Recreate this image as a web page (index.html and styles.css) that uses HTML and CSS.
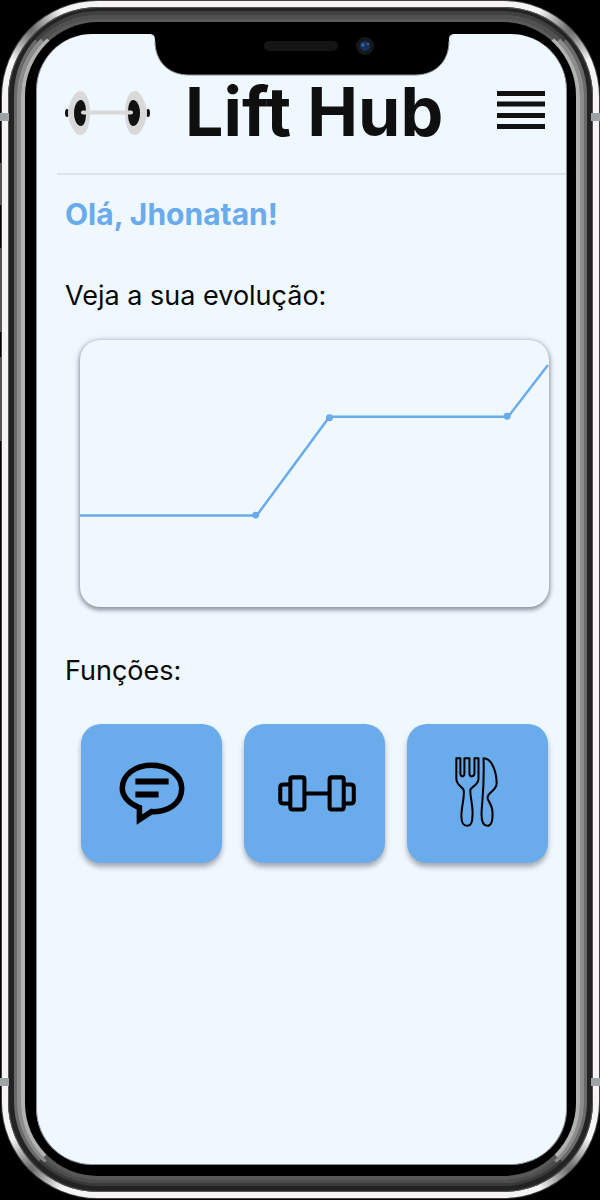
FILE: index.html
```html
<!DOCTYPE html>
<html lang="pt-BR">
<head>
<meta charset="utf-8">
<meta name="viewport" content="width=device-width, initial-scale=1">
<title>Lift Hub</title>
<link rel="stylesheet" href="styles.css">
</head>
<body>
<div class="phone">
  <span class="side-key side-key-mute"></span>
  <span class="side-key side-key-up"></span>
  <span class="side-key side-key-down"></span>
  <div class="steel"><div class="band"><div class="ring ring-outer"><div class="ring ring-middle"><div class="ring ring-inner">
  <div class="screen">
    <svg class="notch" viewBox="0 0 306 42" aria-hidden="true">
      <path d="M0 0C5 0 6 2 6 7C6 27 19 41 40 41H266C287 41 300 27 300 7C300 2 301 0 306 0Z" fill="#000"/>
      <path d="M6 7C6 27 19 41 40 41H266C287 41 300 27 300 7" fill="none" stroke="#8a8e96"/>
      <rect x="115" y="7" width="74" height="10" rx="5" fill="#151515"/>
      <circle cx="216" cy="12" r="9" fill="#17181b"/>
      <circle cx="216" cy="12" r="5" fill="#15305a"/>
      <circle cx="214" cy="11" r="2" fill="#286198"/>
      <circle cx="219" cy="10" r="1" fill="#3573ad"/>
    </svg>
    <header class="topbar">
      <svg class="logo" viewBox="0 -4 86 50" aria-hidden="true">
        <ellipse cx="2" cy="23" rx="2" ry="4" fill="#111"/><ellipse cx="83" cy="23" rx="2" ry="4" fill="#111"/>
        <path d="M15 1C21 1 25 10 25 23C25 36 21 45 15 45C9 45 3 31 3 23C3 15 9 1 15 1Z" fill="#d9d9d9"/>
        <path d="M70 1C64 1 60 10 60 23C60 36 64 45 70 45C76 45 82 31 82 23C82 15 76 1 70 1Z" fill="#d9d9d9"/>
        <path d="M16 10C19 10 21 15 21 23C21 31 19 36 16 36C12 36 9 30 9 23C9 16 12 10 16 10Z" fill="#111"/>
        <path d="M68 10C65 10 63 15 63 23C63 31 65 36 68 36C72 36 75 30 75 23C75 16 72 10 68 10Z" fill="#111"/>
        <path d="M18 22.500H66" stroke="#d9d9d9" stroke-width="4" stroke-linecap="round"/>
      </svg>
      <h1 class="brand">Lift Hub</h1>
      <button class="menu" type="button" aria-label="Menu">
        <svg class="menu-icon" viewBox="0 1 48 40" aria-hidden="true"><path d="M0 3.500H48M0 14H48M0 25.500H48M0 36.500H48" stroke="#111" stroke-width="5"/></svg>
      </button>
    </header>
    <main class="content">
      <p class="greeting">Olá, Jhonatan!</p>
      <h2 class="section-title">Veja a sua evolução:</h2>
      <div class="chart">
        <svg class="chart-plot" viewBox="0 0 470 268" role="img" aria-label="Gráfico de evolução">
          <path d="M0 176H177L250 77H429L469 25" fill="none" stroke="#69abeb" stroke-width="2.500"/>
          <g fill="#69abeb"><circle cx="176" cy="175.500" r="3.500"/><circle cx="250" cy="78" r="3.500"/><circle cx="428" cy="76.500" r="3.500"/></g>
        </svg>
      </div>
      <h2 class="section-title">Funções:</h2>
      <nav class="actions">
        <button class="action" type="button" aria-label="Mensagens">
          <svg class="action-icon" viewBox="0 0 140 138" fill="none" stroke="#000" aria-hidden="true">
            <path d="M58 83C48 79 41 72 41 64C41 50 54 41 70 41C87 41 100 51 100 64C100 79 86 88 70 87L58 95Z" stroke-width="5.500"/>
            <path d="M54 57H87M54 70H77" stroke-width="6"/>
          </svg>
        </button>
        <button class="action" type="button" aria-label="Treinos">
          <svg class="action-icon" viewBox="0 0 140 138" fill="none" stroke="#000" stroke-width="4" aria-hidden="true">
            <rect x="46" y="53" width="14" height="32" rx="2"/><rect x="85" y="53" width="14" height="32" rx="2"/>
            <path d="M46 60H39Q36 60 36 63V76Q36 79 39 79H46M99 60H106Q109 60 109 63V76Q109 79 106 79H99M60 69H85"/>
          </svg>
        </button>
        <button class="action" type="button" aria-label="Alimentação">
          <svg class="action-icon" viewBox="0 0 140 138" fill="none" stroke="#000" stroke-width="2" stroke-linejoin="round" aria-hidden="true">
            <path d="M49 34H53V49Q53 52 55 52Q57 52 57 49V34H62V49Q62 52 64 52Q67 52 67 49V34H71V54C71 60 66 61 63 65C62 70 66 82 65 91C65 99 63 101 60 101C56 101 54 99 54 91C54 82 58 70 56 65C53 61 49 60 49 54Z"/>
            <path d="M76 34C85 34 89 49 89 59C89 66 80 68 80 73C80 77 85 79 85 89C85 98 83 101 80 101C76 101 74 98 74 90C74 78 77 68 76 34Z"/>
          </svg>
        </button>
      </nav>
    </main>
  </div>
  </div></div></div></div></div>
  <span class="antenna antenna-left antenna-top"></span><span class="antenna antenna-right antenna-top"></span>
  <span class="antenna antenna-left antenna-bottom"></span><span class="antenna antenna-right antenna-bottom"></span>
</div>
</body>
</html>
```
FILE: styles.css
```css
* { box-sizing: border-box; }
body { margin: 0; background: #000; font-family: Inter, "Open Sans", sans-serif; color: #080808; }
h1, h2, p { margin: 0; }
button { padding: 0; border: 0; background: none; cursor: pointer; }
svg { display: block; }

.phone { position: relative; display: flex; min-height: 100vh; padding: 1px 1px 2px 2px; }
.steel, .band, .ring { display: flex; flex: 1; min-width: 0; }
.steel {
  padding: 6px;
  border-radius: 96px;
  background:
    radial-gradient(circle at 28px 28px, #666 0, transparent 36px),
    radial-gradient(circle at calc(100% - 28px) 28px, #666 0, transparent 36px),
    radial-gradient(circle at 28px calc(100% - 28px), #666 0, transparent 36px),
    radial-gradient(circle at calc(100% - 28px) calc(100% - 28px), #666 0, transparent 36px),
    #f5f3f3;
  box-shadow: 0 0 0 1px #444;
}
.band { padding: 4px 6px 6px; border-radius: 90px; background: #232323; box-shadow: inset 0 0 0 1px #555; }
.ring { border-style: solid; }
.ring-outer { border-width: 4px 3px 3px; border-color: #404040 #6a6a6a #3a3a3a; border-radius: 84px; background: #555; }
.ring-middle { border-width: 4px 4px 3px; border-color: #505050 #8c8c8c #4c4c4c; border-radius: 81px; background: #444; }
.ring-inner { padding: 12px 9px 11px 11px; border-width: 3px 4px 4px; border-color: #5a5a5a #b2b2b2 #585858; border-radius: 77px; background: #000; }

.side-key { position: absolute; left: 0; width: 2px; background: #555; }
.side-key-mute { top: 163px; height: 42px; }
.side-key-up { top: 248px; height: 84px; }
.side-key-down { top: 357px; height: 84px; }
.antenna { position: absolute; width: 9px; height: 8px; background: #9ea3a3; }
.antenna-left { left: 0; }
.antenna-right { right: 0; }
.antenna-top { top: 113px; }
.antenna-bottom { bottom: 114px; }

.screen { flex: 1; min-width: 0; overflow: hidden; border: 1px solid #8a8e96; border-width: 0 1px 1px; border-radius: 56px; background: #eff7ff; }
.notch { width: 306px; height: 42px; margin: 0 auto; }

.topbar { display: flex; align-items: center; height: 99px; margin-left: 20px; padding: 0 21px 28px 8px; border-bottom: 2px solid #e0e3e6; }
.logo { width: 86px; height: 50px; }
.brand { margin-left: 34px; font-size: 68px; line-height: 72px; font-weight: 700; color: #0f0f0f; white-space: nowrap; }
.menu { margin-left: auto; }
.menu-icon { width: 48px; height: 40px; }

.content { padding: 21px 17px 40px 28px; }
.greeting { font-size: 30px; line-height: 36px; font-weight: 700; color: #69abeb; }
.section-title { margin-top: 46px; font-size: 27px; line-height: 36px; font-weight: 400; }
.chart { margin: 26px 0 0 15px; overflow: hidden; border-radius: 20px; box-shadow: 0 1px 5px 1px rgba(60, 60, 70, 0.4), 0 3px 4px rgba(60, 60, 70, 0.3); }
.chart-plot { width: 100%; height: auto; }
.actions { display: grid; grid-template-columns: repeat(3, 1fr); gap: 22px; margin: 35px 1px 0 16px; }
.action { border-radius: 20px; background: #69abeb; box-shadow: 0 4px 5px rgba(60, 60, 70, 0.4); }
.action-icon { width: 100%; height: auto; }
```
